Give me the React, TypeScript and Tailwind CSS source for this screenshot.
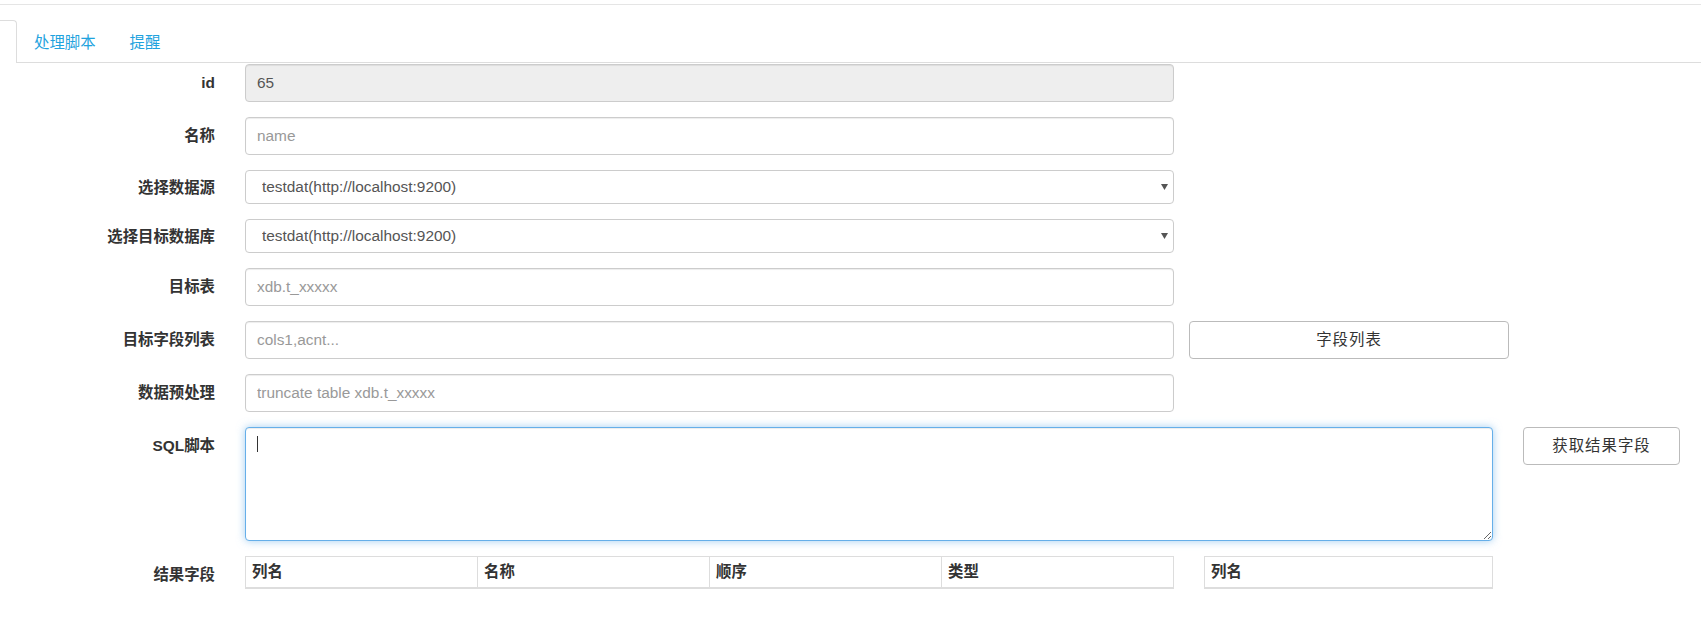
import React from 'react';

const inputBase =
  'shrink-0 h-[38px] px-[11px] rounded-[4px] border border-[#ccc] text-[#555] text-[15.4px] shadow-[inset_0_1px_1px_rgba(0,0,0,0.075)] outline-none placeholder:text-[#999]';

function Row({ label, children }: { label: string; children: React.ReactNode }) {
  return (
    <div className="flex items-start mb-[15px]">
      <div className="w-[215px] h-[38px] flex items-center justify-end font-bold text-[#333] text-[15.4px] shrink-0">
        {label}
      </div>
      <div className="ml-[30px] flex items-start shrink-0">{children}</div>
    </div>
  );
}

function SelectRow({ label, value }: { label: string; value: string }) {
  return (
    <div className="flex items-start mb-[15px]">
      <div className="w-[215px] h-[34px] pt-[2px] flex items-center justify-end font-bold text-[#333] text-[15.4px] shrink-0">
        {label}
      </div>
      <div className="ml-[30px] relative w-[929px] shrink-0">
        <select
          defaultValue={value}
          className="appearance-none w-full h-[34px] pl-[16px] pr-8 rounded-[4px] border border-[#ccc] bg-white text-[#555] text-[15.4px] outline-none"
        >
          <option>{value}</option>
        </select>
        <svg className="absolute right-[6px] top-[14px]" width="7" height="6" viewBox="0 0 7 6">
          <path d="M0 0h7L3.5 6z" fill="#555" />
        </svg>
      </div>
    </div>
  );
}

export default function App() {
  const cols = ['列名', '名称', '顺序', '类型'];
  return (
    <div
      className="min-h-screen bg-white text-[#333] text-[15.4px]"
      style={{ fontFamily: '"Liberation Sans", "Noto Sans CJK SC", sans-serif' }}
    >
      <div className="h-[5px] border-b border-[#e5e5e5]" />

      {/* tabs */}
      <div className="flex mt-[15px] h-[43px] border-b border-[#ddd]">
        <div className="w-[17px] h-[43px] -mb-px border-t border-r border-[#ddd] rounded-tr-[4px] bg-white" />
        <a className="ml-[2px] px-[15px] pt-[4px] h-[42px] flex items-center text-[#1fa3de] cursor-pointer">处理脚本</a>
        <a className="ml-[4px] px-[15px] pt-[4px] h-[42px] flex items-center text-[#1fa3de] cursor-pointer">提醒</a>
      </div>

      <div className="pt-px">
        <Row label="id">
          <input className={inputBase + ' w-[929px] bg-[#eee]'} defaultValue="65" readOnly />
        </Row>
        <Row label="名称">
          <input className={inputBase + ' w-[929px] bg-white'} placeholder="name" />
        </Row>
        <SelectRow label="选择数据源" value="testdat(http://localhost:9200)" />
        <SelectRow label="选择目标数据库" value="testdat(http://localhost:9200)" />
        <Row label="目标表">
          <input className={inputBase + ' w-[929px] bg-white'} placeholder="xdb.t_xxxxx" />
        </Row>
        <Row label="目标字段列表">
          <input className={inputBase + ' w-[929px] bg-white'} placeholder="cols1,acnt..." />
          <button className="shrink-0 ml-[15px] w-[320px] h-[38px] rounded-[4px] border border-[#bbb] bg-white text-[#333] text-[15.4px] tracking-[1px]">
            字段列表
          </button>
        </Row>
        <Row label="数据预处理">
          <input className={inputBase + ' w-[929px] bg-white'} placeholder="truncate table xdb.t_xxxxx" />
        </Row>
        <Row label="SQL脚本">
          <div className="relative shrink-0">
            <textarea className="block w-[1248px] h-[114px] px-[11px] py-[7px] rounded-[4px] border border-[#66afe9] bg-white text-[#555] text-[15.4px] outline-none shadow-[inset_0_1px_1px_rgba(0,0,0,0.075),0_0_8px_rgba(102,175,233,0.6)]" />
            <div className="absolute left-[12px] top-[9px] w-px h-[16px] bg-[#333]" />
          </div>
          <button className="shrink-0 ml-[30px] w-[157px] h-[38px] rounded-[4px] border border-[#bbb] bg-white text-[#333] text-[15.4px] tracking-[1px]">
            获取结果字段
          </button>
        </Row>
        <Row label="结果字段">
          <table className="shrink-0 w-[929px] border border-[#ddd] border-collapse">
            <thead>
              <tr>
                {cols.map((c) => (
                  <th
                    key={c}
                    className="w-1/4 h-[31px] text-left font-bold px-[6px] border border-[#ddd] border-b-2"
                  >
                    {c}
                  </th>
                ))}
              </tr>
            </thead>
          </table>
          <table className="shrink-0 ml-[30px] w-[289px] border border-[#ddd] border-collapse">
            <thead>
              <tr>
                <th className="h-[31px] text-left font-bold px-[6px] border border-[#ddd] border-b-2">列名</th>
              </tr>
            </thead>
          </table>
        </Row>
      </div>
    </div>
  );
}
